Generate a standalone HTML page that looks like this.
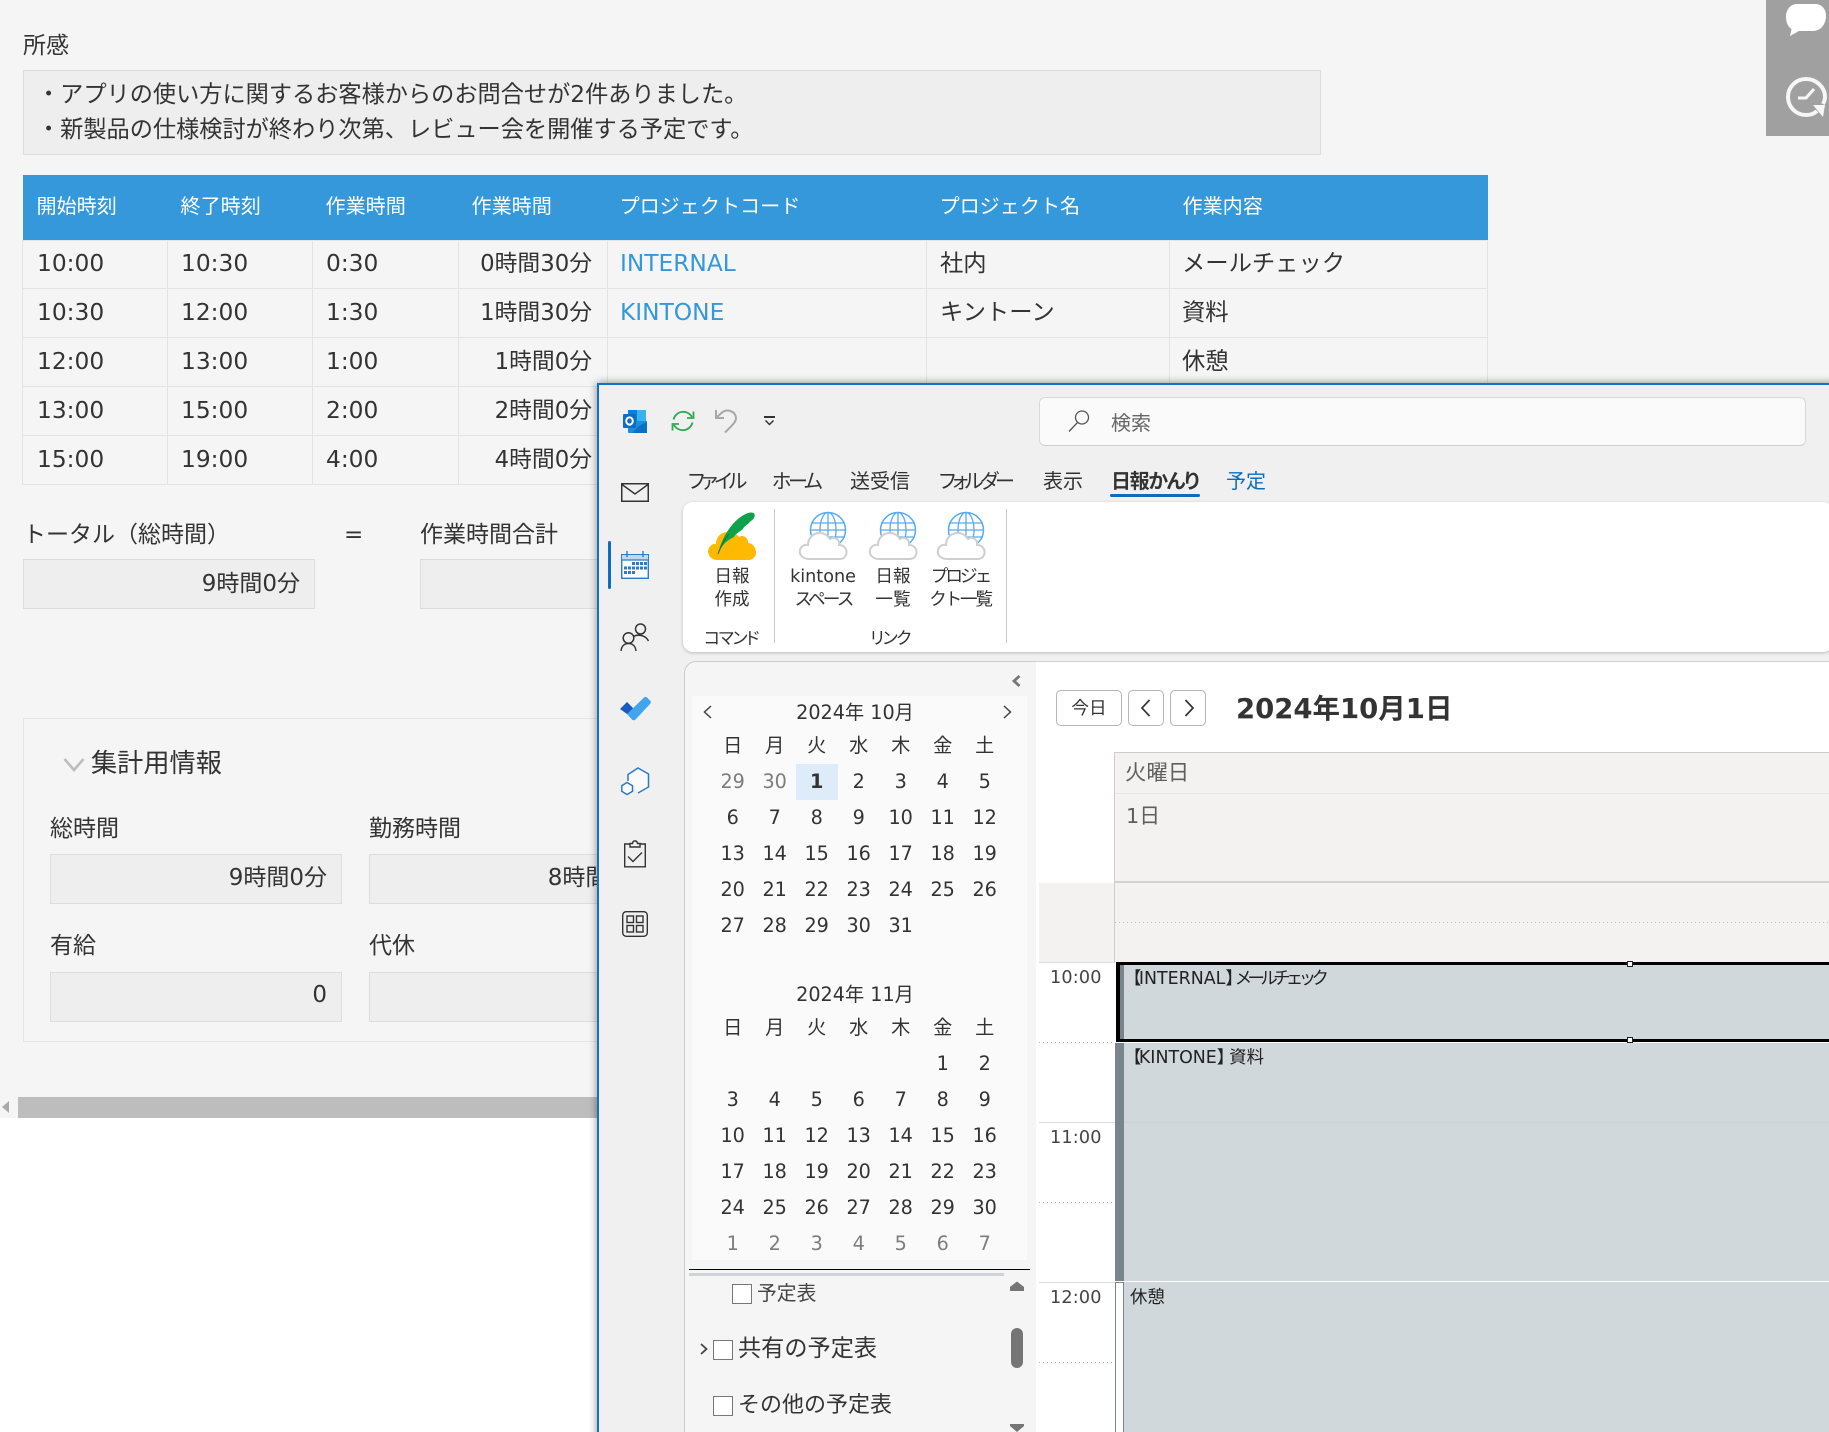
<!DOCTYPE html>
<html lang="ja"><head><meta charset="utf-8"><title>日報</title>
<style>
html,body{margin:0;padding:0;width:1829px;height:1432px;overflow:hidden;background:#fff}
body{position:relative;font-family:"DejaVu Sans","Noto Sans CJK JP",sans-serif;color:#333}
.t{position:absolute;white-space:nowrap;line-height:30px;height:30px}
.c{transform:translateX(-50%);text-align:center}
.a{position:absolute;box-sizing:border-box}
.f{font-size:23px}
.box{position:absolute;box-sizing:border-box;background:#eee;border:1px solid #ddd}
svg{position:absolute;overflow:visible}
table.m{position:absolute;left:22px;top:175px;width:1465px;border-collapse:collapse;table-layout:fixed;font-size:23.3px}
table.m th{background:#3498db;color:#fff;font-weight:400;font-size:20.1px;text-align:left;height:65px;padding:16px 0 0 13px;box-sizing:border-box;vertical-align:top;line-height:30px}
table.m th:first-child{padding-left:14px}
table.m th.p{padding-left:12px}
table.m td{border:1px solid #e3e3e3;height:49px;box-sizing:border-box;padding:9px 13px 0;vertical-align:top;line-height:30px;white-space:nowrap}
table.m tr:nth-child(2) td{height:48px;padding-top:8px}
table.m td:first-child{padding-left:14px}
table.m td:last-child{padding-left:12px}
table.m td.r{text-align:right;font-size:22.8px;padding-right:15px}
table.m td.l{color:#3498db;padding-left:12px}
.tab{font-family:"Noto Sans CJK JP",sans-serif;font-size:20px;font-feature-settings:"palt";color:#333}
.kn{letter-spacing:-3.3px}
.rb{font-size:17.6px;line-height:23px;height:46px}
.g{font-family:"Noto Sans CJK JP",sans-serif;font-size:17px;font-feature-settings:"palt";color:#333;letter-spacing:-1.5px}
.cal{position:absolute;left:711.7px;width:294px;display:grid;grid-template-columns:repeat(7,42px);grid-auto-rows:36px;line-height:36px;text-align:center;font-size:19.2px;color:#333}
.cal i{font-style:normal;color:#7d7d7d}
.cal b{background:#deecf9;font-weight:700}
.cb{position:absolute;box-sizing:border-box;width:20px;height:20px;background:#fff;border:1px solid #777}
.d{position:absolute;height:1px;background-image:repeating-linear-gradient(90deg,#bdbdbd 0 1px,transparent 1px 4px)}
.ev{font-size:17.4px;color:#222}
.ev s{text-decoration:none;letter-spacing:-4.6px}
.ev u{text-decoration:none;letter-spacing:-2.5px}
.ev em{font-style:normal;letter-spacing:-8px}
.ev em.k{letter-spacing:-5px}
</style></head><body>

<div class="a" style="left:0;top:0;width:1829px;height:1118px;background:#f5f5f5"></div>

<div class="t f" style="left:23px;top:31px">所感</div>
<div class="box" style="left:23px;top:70px;width:1298px;height:85px;border:1px solid #dcdcdc"></div>
<div class="t" style="left:37px;top:80px;font-size:23.2px">・アプリの使い方に関するお客様からのお問合せが2件ありました。</div>
<div class="t" style="left:37px;top:115px;font-size:23.2px">・新製品の仕様検討が終わり次第、レビュー会を開催する予定です。</div>

<table class="m">
<colgroup><col style="width:145px"><col style="width:145px"><col style="width:146px"><col style="width:149px"><col style="width:319px"><col style="width:243px"><col style="width:318px"></colgroup>
<tr><th>開始時刻</th><th>終了時刻</th><th>作業時間</th><th>作業時間</th><th class="p">プロジェクトコード</th><th>プロジェクト名</th><th>作業内容</th></tr>
<tr><td>10:00</td><td>10:30</td><td>0:30</td><td class="r">0時間30分</td><td class="l">INTERNAL</td><td>社内</td><td>メールチェック</td></tr>
<tr><td>10:30</td><td>12:00</td><td>1:30</td><td class="r">1時間30分</td><td class="l">KINTONE</td><td>キントーン</td><td>資料</td></tr>
<tr><td>12:00</td><td>13:00</td><td>1:00</td><td class="r">1時間0分</td><td></td><td></td><td>休憩</td></tr>
<tr><td>13:00</td><td>15:00</td><td>2:00</td><td class="r">2時間0分</td><td></td><td></td><td></td></tr>
<tr><td>15:00</td><td>19:00</td><td>4:00</td><td class="r">4時間0分</td><td></td><td></td><td></td></tr>
</table>

<div class="t f" style="left:23px;top:520px">トータル（総時間）</div>
<div class="t f" style="left:344px;top:520px">=</div>
<div class="t f" style="left:420px;top:520px">作業時間合計</div>
<div class="box" style="left:23px;top:559px;width:292px;height:50px"></div>
<div class="t f" style="right:1529px;top:569px">9時間0分</div>
<div class="box" style="left:420px;top:559px;width:292px;height:50px"></div>

<div class="a" style="left:23px;top:718px;width:1298px;height:324px;border:1px solid #e6e6e6"></div>
<svg style="left:63px;top:757px" width="22" height="16" viewBox="0 0 22 16"><path d="M1.500 2 L11 13 L20.500 2" fill="none" stroke="#bdbdbd" stroke-width="2.600"/></svg>
<div class="t" style="left:91px;top:749px;font-size:26.2px">集計用情報</div>
<div class="t f" style="left:50px;top:814px">総時間</div>
<div class="t f" style="left:369px;top:814px">勤務時間</div>
<div class="box" style="left:50px;top:854px;width:292px;height:50px"></div>
<div class="t f" style="right:1502px;top:863px">9時間0分</div>
<div class="box" style="left:369px;top:854px;width:292px;height:50px"></div>
<div class="t f" style="right:1183px;top:863px">8時間0分</div>
<div class="t f" style="left:50px;top:931px">有給</div>
<div class="t f" style="left:369px;top:931px">代休</div>
<div class="box" style="left:50px;top:972px;width:292px;height:50px"></div>
<div class="t f" style="right:1502px;top:980px">0</div>
<div class="box" style="left:369px;top:972px;width:292px;height:50px"></div>

<div class="a" style="left:18px;top:1097px;width:580px;height:21px;background:#bdbdbd"></div>
<svg style="left:2px;top:1101px" width="7" height="12" viewBox="0 0 7 12"><path d="M7 0V12L0 6Z" fill="#aaa"/></svg>

<div class="a" style="left:1766px;top:0;width:63px;height:136px;background:#a0a0a0"></div>
<svg style="left:1786px;top:4px" width="40" height="32" viewBox="0 0 40 32"><path d="M11 0H29C35 0 40 4 40 12C40 20 35 27 27 27H13L4 32L5.500 25C2 23 0 18 0 13C0 5 5 0 11 0Z" fill="#fff"/></svg>
<svg style="left:1786px;top:77px" width="40" height="41" viewBox="0 0 40 41"><path d="M37 27C38.500 24 39 22 39 20C39 10 30 2 20 2C10 2 2 10 2 20C2 30 10 38 20 38C24 38 28 37 31 34" fill="none" stroke="#f6f6f6" stroke-width="4"/><path d="M27 28H39L37 40Z" fill="#f6f6f6"/><path d="M12 21H20L28 12" fill="none" stroke="#f6f6f6" stroke-width="3"/></svg>

<!-- Outlook window -->
<div class="a" style="left:597px;top:383px;width:1240px;height:1060px;background:#f0f0f0;border-left:2.500px solid #0f73cb;border-top:2px solid #0f73cb;box-shadow:0 0 8px rgba(0,0,0,.45)"></div>

<svg style="left:623px;top:409px" width="24" height="24" viewBox="0 0 24 24">
<path d="M5 1H23V13H5Z" fill="#0a7fdc"/><path d="M14 1H23V12H14Z" fill="#35b4f0"/>
<path d="M5 12H24V24H6C5 24 5 23 5 22Z" fill="#1490df"/><path d="M24 13V24H9L16 17Z" fill="#0d6fc4"/>
<rect x="0" y="5" width="13" height="14" rx="1" fill="#0f6cc4"/><ellipse cx="6.500" cy="12" rx="3.300" ry="3.600" fill="none" stroke="#fff" stroke-width="2"/></svg>
<svg style="left:671px;top:409px" width="24" height="24" viewBox="0 0 24 24" fill="none" stroke="#33a853" stroke-width="1.800">
<path d="M2.500 10.500A10 10 0 0 1 21 8"/><path d="M22.500 2.500V9H16"/><path d="M21.500 13.500A10 10 0 0 1 3 16"/><path d="M1.500 21.500V15H8"/></svg>
<svg style="left:715px;top:409px" width="22" height="24" viewBox="0 0 22 24" fill="none" stroke="#a8a8a8" stroke-width="2">
<path d="M1 1V9H9"/><path d="M1.500 8.500L7 3.500C12 -.5 20.500 2 21 9C21 13 17.500 16 10 23.500"/></svg>
<svg style="left:764px;top:416px" width="11" height="10" viewBox="0 0 11 10" fill="none" stroke="#333"><path d="M0 1H11" stroke-width="2"/><path d="M1.500 4.500L5.500 8.500L9.500 4.500" stroke-width="1.500"/></svg>

<div class="a" style="left:1039px;top:397px;width:767px;height:49px;background:#fafafa;border:1px solid #d8d8d8;border-bottom:1.500px solid #cfcfcf;border-radius:6px"></div>
<svg style="left:1068px;top:410px" width="22" height="22" viewBox="0 0 22 22" fill="none" stroke="#555" stroke-width="1.300"><circle cx="14" cy="7.500" r="6.500"/><path d="M9.500 12.500L1 21.500"/></svg>
<div class="t" style="left:1111px;top:408px;font-size:20px;color:#666">検索</div>

<div class="t tab kn" style="left:688px;top:465px">ファイル</div>
<div class="t tab kn" style="left:772px;top:465px">ホーム</div>
<div class="t tab" style="left:850px;top:465px">送受信</div>
<div class="t tab kn" style="left:939px;top:465px">フォルダー</div>
<div class="t tab" style="left:1043px;top:465px">表示</div>
<div class="t tab" style="left:1111px;top:465px;font-weight:700;letter-spacing:-1.400px">日報かんり</div>
<div class="a" style="left:1110px;top:494px;width:90px;height:3px;background:#0f6cbd;border-radius:2px"></div>
<div class="t tab" style="left:1226px;top:465px;color:#0f6cbd">予定</div>

<!-- rail icons -->
<svg style="left:621px;top:483px" width="28" height="19" viewBox="0 0 28 19" fill="none" stroke="#333" stroke-width="1.500"><rect x=".75" y=".75" width="26.500" height="17.500"/><path d="M1 1.500L14 11L27 1.500"/></svg>
<div class="a" style="left:608px;top:541px;width:3px;height:48px;background:#0f6cc4;border-radius:2px"></div>
<svg style="left:621px;top:551px" width="28" height="28" viewBox="0 0 28 28">
<rect x=".7" y="3.700" width="26.600" height="23.600" fill="#fafcff" stroke="#2f7cc4" stroke-width="1.400"/><path d="M1 4H27V9H1Z" fill="#bcd8f2"/><path d="M0 9H28" stroke="#2f7cc4" stroke-width="1.200"/><path d="M6 0V6M22 0V6" stroke="#2f7cc4" stroke-width="1.400"/>
<g fill="#2f7cc4"><rect x="11" y="11" width="3" height="3"/><rect x="15" y="11" width="3" height="3"/><rect x="19" y="11" width="3" height="3"/><rect x="23" y="11" width="3" height="3"/><rect x="3" y="15.500" width="3" height="3"/><rect x="7" y="15.500" width="3" height="3"/><rect x="11" y="15.500" width="3" height="3"/><rect x="15" y="15.500" width="3" height="3"/><rect x="19" y="15.500" width="3" height="3"/><rect x="23" y="15.500" width="3" height="3"/><rect x="3" y="20" width="3" height="3"/><rect x="7" y="20" width="3" height="3"/><rect x="11" y="20" width="3" height="3"/></g></svg>
<svg style="left:620px;top:623px" width="29" height="28" viewBox="0 0 29 28" fill="none" stroke="#333" stroke-width="1.500"><circle cx="20.500" cy="6" r="5"/><path d="M14 13.500C16 11.500 25 11 28.500 18"/><circle cx="8.500" cy="15" r="5.300"/><path d="M1 28C1.500 23 4.500 20.500 8.500 20.500C12.500 20.500 15.500 23 16 28"/></svg>
<svg style="left:620px;top:697px" width="31" height="24" viewBox="0 0 31 24"><path d="M0 12L7 5L14 12L7 17Z" fill="#185abd"/><path d="M7 17L24 .5C25 -.3 26 -.3 27 .5L30.500 4C31 5 31 6 30 7L15.500 22.500C14.500 23.500 13 23.500 12 22.500Z" fill="#41a5ee"/></svg>
<svg style="left:621px;top:767px" width="28" height="28" viewBox="0 0 28 28" fill="none" stroke="#2a7ac8" stroke-width="1.500"><path d="M7 14V7.500L17 1L27.500 7V20L17 26" fill="#fafafa"/><path d="M6 15.500L11.500 18.700V24.300L6 27.500L.8 24.300V18.700Z" fill="#fff"/></svg>
<svg style="left:624px;top:840px" width="22" height="28" viewBox="0 0 22 28" fill="none" stroke="#333" stroke-width="1.400"><path d="M6 4H.7V26.800H21.300V4H16"/><path d="M6 7V3.500H8.500C9 0 13 0 13.500 3.500H16V7Z"/><path d="M4 16.500L9 21.500L18 12.500"/></svg>
<svg style="left:622px;top:911px" width="26" height="26" viewBox="0 0 26 26" fill="none" stroke="#333" stroke-width="1.400"><rect x=".7" y=".7" width="24.600" height="24.600" rx="3.500"/><rect x="5" y="5" width="6.500" height="6.500"/><rect x="14.500" y="5" width="6.500" height="6.500"/><rect x="5" y="14.500" width="6.500" height="6.500"/><rect x="14.500" y="14.500" width="6.500" height="6.500"/></svg>

<!-- ribbon -->
<div class="a" style="left:683px;top:502px;width:1150px;height:150px;background:#fff;border-radius:10px;box-shadow:0 1px 3px rgba(0,0,0,.22)"></div>
<div class="a" style="left:774px;top:509px;width:1px;height:134px;background:#cacaca"></div>
<div class="a" style="left:1006px;top:509px;width:1px;height:134px;background:#cacaca"></div>

<svg width="0" height="0" style="left:0;top:0"><defs>
<g id="gl"><circle cx="29" cy="18" r="17.500" fill="#fff" stroke="#58aaf0" stroke-width="1.500"/>
<ellipse cx="29" cy="18" rx="8" ry="17.500" fill="none" stroke="#58aaf0" stroke-width="1.300"/>
<path d="M12 11H46M11.500 18H46.500M12 25H46M29 .5V35" fill="none" stroke="#58aaf0" stroke-width="1.300"/>
<path d="M10 47C3 47 0 42 1 38C2 34 6 32 9 33C9 26 14 21 21 21C26 21 29 24 31 27C35 24 41 27 40 33C45 33 48 37 47.500 41C47 45 44 47 41 47Z" fill="#fff" stroke="#cfcfcf" stroke-width="2"/></g>
</defs></svg>
<svg style="left:708px;top:512px" width="48" height="48" viewBox="0 0 48 48">
<path d="M9 48C3 48 0 43 0 39C1 34 5 31 8 32C8 25 13 20 20 20C25 20 29 22 31 25C35 22 41 26 40 31C45 31 48 36 48 41C48 45 44 48 40 48Z" fill="#ffb900"/>
<path d="M10 42C14 24 26 6 40 1C46 -.5 48 2 46 6C44 9 42 9 41 11C38 14 36 14 35 17C30 21 27 22 26 25C20 28 14 32 10 42Z" fill="#0ea24a"/><path d="M10 42C14 32 17 26 21 22" stroke="#07783a" fill="none"/></svg>
<svg style="left:799px;top:512px" width="48" height="48" viewBox="0 0 48 48"><use href="#gl"/></svg>
<svg style="left:869px;top:512px" width="48" height="48" viewBox="0 0 48 48"><use href="#gl"/></svg>
<svg style="left:937px;top:512px" width="48" height="48" viewBox="0 0 48 48"><use href="#gl"/></svg>

<div class="t c rb" style="left:732px;top:566px">日報<br>作成</div>
<div class="t c rb" style="left:823px;top:566px">kintone<br><span style="letter-spacing:-2.800px">スペース</span></div>
<div class="t c rb" style="left:893px;top:566px">日報<br>一覧</div>
<div class="t c rb" style="left:960px;top:566px"><span style="letter-spacing:-3px">プロジェ</span><br><span style="letter-spacing:-2.200px">クト一覧</span></div>
<div class="t c g" style="left:731px;top:622px">コマンド</div>
<div class="t c g" style="left:890px;top:622px">リンク</div>

<!-- left pane -->
<div class="a" style="left:684px;top:661px;width:352px;height:780px;background:#f5f5f5;border-left:1px solid #ccc;border-top:1px solid #ccc;border-top-left-radius:12px"></div>
<div class="a" style="left:692px;top:696px;width:335px;height:564px;background:#fafafa"></div>
<svg style="left:1012px;top:675px" width="9" height="12" viewBox="0 0 9 12"><path d="M7.500 1L2 6L7.500 11" fill="none" stroke="#777" stroke-width="2.800"/></svg>

<svg style="left:703px;top:705px" width="9" height="14" viewBox="0 0 9 14"><path d="M8 1L1.500 7L8 13" fill="none" stroke="#444" stroke-width="1.500"/></svg>
<svg style="left:1003px;top:705px" width="9" height="14" viewBox="0 0 9 14"><path d="M1 1L7.500 7L1 13" fill="none" stroke="#444" stroke-width="1.500"/></svg>
<div class="t c" style="left:855px;top:698px;font-size:19.2px">2024年 10月</div>
<div class="cal" style="top:728px">
<span>日</span><span>月</span><span>火</span><span>水</span><span>木</span><span>金</span><span>土</span>
<i>29</i><i>30</i><b>1</b><span>2</span><span>3</span><span>4</span><span>5</span>
<span>6</span><span>7</span><span>8</span><span>9</span><span>10</span><span>11</span><span>12</span>
<span>13</span><span>14</span><span>15</span><span>16</span><span>17</span><span>18</span><span>19</span>
<span>20</span><span>21</span><span>22</span><span>23</span><span>24</span><span>25</span><span>26</span>
<span>27</span><span>28</span><span>29</span><span>30</span><span>31</span>
</div>
<div class="t c" style="left:855px;top:980px;font-size:19.2px">2024年 11月</div>
<div class="cal" style="top:1010px">
<span>日</span><span>月</span><span>火</span><span>水</span><span>木</span><span>金</span><span>土</span>
<span></span><span></span><span></span><span></span><span></span><span>1</span><span>2</span>
<span>3</span><span>4</span><span>5</span><span>6</span><span>7</span><span>8</span><span>9</span>
<span>10</span><span>11</span><span>12</span><span>13</span><span>14</span><span>15</span><span>16</span>
<span>17</span><span>18</span><span>19</span><span>20</span><span>21</span><span>22</span><span>23</span>
<span>24</span><span>25</span><span>26</span><span>27</span><span>28</span><span>29</span><span>30</span>
<i>1</i><i>2</i><i>3</i><i>4</i><i>5</i><i>6</i><i>7</i>
</div>

<div class="a" style="left:689px;top:1269px;width:341px;height:1px;background:#000"></div>
<div class="a" style="left:689px;top:1273px;width:315px;height:3px;background:#cdd3d9"></div>
<svg style="left:1010px;top:1281px" width="14" height="10" viewBox="0 0 14 10"><path d="M7 .5L14 6V10H0V6Z" fill="#757575"/></svg>
<div class="a" style="left:1011px;top:1328px;width:12px;height:40px;background:#757575;border-radius:6px"></div>
<svg style="left:1010px;top:1424px" width="14" height="8" viewBox="0 0 14 8"><path d="M0 0H14V2L7 8L0 2Z" fill="#757575"/></svg>

<div class="cb" style="left:732px;top:1284px"></div>
<div class="t" style="left:757px;top:1279px;font-size:19.8px;color:#444">予定表</div>
<svg style="left:700px;top:1343px" width="8" height="12" viewBox="0 0 8 12"><path d="M1 1L6.500 6L1 11" fill="none" stroke="#444" stroke-width="1.800"/></svg>
<div class="cb" style="left:713px;top:1340px"></div>
<div class="t" style="left:738px;top:1334px;font-size:23.2px">共有の予定表</div>
<div class="cb" style="left:713px;top:1396px"></div>
<div class="t" style="left:738px;top:1391px;font-size:22px">その他の予定表</div>

<!-- main pane -->
<div class="a" style="left:1036px;top:661px;width:800px;height:780px;background:#fff;border-top:1px solid #d0d0d0"></div>
<div class="a" style="left:1056px;top:690px;width:66px;height:36px;background:#fff;border:1px solid #b5b5b5;border-radius:5px"></div>
<div class="t c" style="left:1089px;top:694px;font-size:17.6px">今日</div>
<div class="a" style="left:1128px;top:690px;width:36px;height:36px;border:1px solid #b5b5b5;border-radius:5px"></div>
<div class="a" style="left:1170px;top:690px;width:36px;height:36px;border:1px solid #b5b5b5;border-radius:5px"></div>
<svg style="left:1140px;top:699px" width="11" height="18" viewBox="0 0 11 18"><path d="M9.500 1L2 9L9.500 17" fill="none" stroke="#333" stroke-width="1.700"/></svg>
<svg style="left:1184px;top:699px" width="11" height="18" viewBox="0 0 11 18"><path d="M1.500 1L9 9L1.500 17" fill="none" stroke="#333" stroke-width="1.700"/></svg>
<div class="t" style="left:1236px;top:694px;font-size:27.5px;font-weight:700">2024年10月1日</div>

<div class="a" style="left:1114px;top:752px;width:720px;height:131px;background:#f3f2f1;border-left:1px solid #ccc;border-top:1px solid #ccc;border-bottom:2px solid #d2d2d2"></div>
<div class="a" style="left:1115px;top:793px;width:720px;height:1px;background:#e8e8e8"></div>
<div class="t" style="left:1125px;top:759px;font-size:21.400px;color:#605e5c">火曜日</div>
<div class="t" style="left:1126px;top:801px;font-size:20.800px;color:#605e5c">1日</div>

<div class="a" style="left:1039px;top:883px;width:795px;height:79px;background:#f3f2f1"></div>
<div class="a" style="left:1114px;top:883px;width:1px;height:79px;background:#ccc"></div>
<div class="d" style="left:1115px;top:922px;width:720px"></div>
<div class="a" style="left:1039px;top:962px;width:76px;height:1px;background:#ddd"></div>
<div class="d" style="left:1039px;top:1042px;width:76px"></div>
<div class="a" style="left:1039px;top:1122px;width:76px;height:1px;background:#ddd"></div>
<div class="d" style="left:1039px;top:1202px;width:76px"></div>
<div class="a" style="left:1039px;top:1282px;width:76px;height:1px;background:#ddd"></div>
<div class="d" style="left:1039px;top:1362px;width:76px"></div>
<div class="t" style="left:1050px;top:963px;font-size:17.600px;color:#444;letter-spacing:.2px">10:00</div>
<div class="t" style="left:1050px;top:1123px;font-size:17.600px;color:#444;letter-spacing:.2px">11:00</div>
<div class="t" style="left:1050px;top:1283px;font-size:17.600px;color:#444;letter-spacing:.2px">12:00</div>

<!-- events -->
<div class="a" style="left:1115px;top:1043px;width:720px;height:238px;background:#d1d8dc"></div>
<div class="a" style="left:1115px;top:1043px;width:9px;height:238px;background:#78868c"></div>
<div class="a" style="left:1124px;top:1122px;width:710px;height:1px;background:#cbd2d6"></div>
<div class="t ev" style="left:1124px;top:1043px"><u>【</u>KINTONE<em class="k">】</em>資料</div>

<div class="a" style="left:1116px;top:962px;width:720px;height:80px;background:#d1d8dc;border:3px solid #000;border-left-width:4px"></div>
<div class="a" style="left:1120px;top:965px;width:4px;height:74px;background:#78868c"></div>
<div class="a" style="left:1627px;top:961px;width:6px;height:6px;background:#fff;border:1px solid #222"></div>
<div class="a" style="left:1627px;top:1037px;width:6px;height:6px;background:#fff;border:1px solid #222"></div>
<div class="t ev" style="left:1124px;top:964px"><u>【</u>INTERNAL<em>】</em><s>メールチェック</s></div>

<div class="a" style="left:1124px;top:1282px;width:710px;height:151px;background:#d1d8dc"></div>
<div class="a" style="left:1115px;top:1282px;width:9px;height:151px;background:#fff;border:1px solid #78868c;border-bottom:0"></div>
<div class="t ev" style="left:1130px;top:1283px">休憩</div>

</body></html>
